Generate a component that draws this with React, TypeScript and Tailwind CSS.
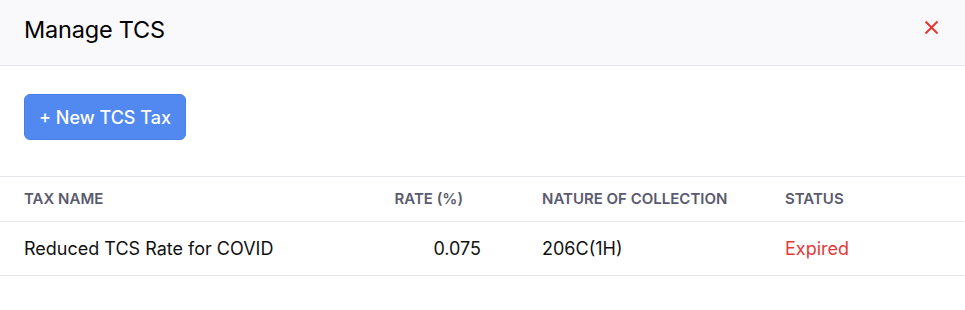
import React from 'react';

const rows = [
  { name: 'Reduced TCS Rate for COVID', rate: '0.075', nature: '206C(1H)', status: 'Expired' },
];

const App: React.FC = () => {
  return (
    <div className="w-[965px] h-[310px] bg-white font-['Inter',sans-serif] text-[#1f1f1f]">
      {/* header */}
      <div className="h-[66px] bg-[#f9f9fb] border-b border-[#e6e6ec] flex items-center justify-between pl-6 pr-6">
        <h1 className="text-[23.5px] font-normal text-black tracking-[-0.2px] pb-[5px]">Manage TCS</h1>
        <button className="self-start mt-[17px] w-5 h-5 flex items-center justify-center text-[#e5392f]">
          <svg width="15" height="15" viewBox="0 0 15 15" fill="none" stroke="currentColor" strokeWidth="2">
            <path d="M1.5 1.5 L13.5 13.5 M13.5 1.5 L1.5 13.5" />
          </svg>
        </button>
      </div>

      {/* action */}
      <div className="px-6 pt-7 pb-9">
        <button className="h-[46px] px-[14px] rounded-md bg-[#5189f1] border border-[#4a7fe6] text-white text-[18px] font-medium">
          + New TCS Tax
        </button>
      </div>

      {/* table */}
      <table className="w-full border-collapse table-fixed">
        <colgroup>
          <col className="w-[380px]" />
          <col className="w-[101px]" />
          <col className="w-[304px]" />
          <col />
        </colgroup>
        <thead>
          <tr className="border-t border-b border-[#e6e6ec] h-[45px] text-[15px] font-semibold text-[#5a5a6e] uppercase">
            <th className="text-left pl-6 font-semibold">Tax Name</th>
            <th className="text-right pr-[18px] font-semibold">Rate (%)</th>
            <th className="text-left pl-[61px] font-semibold">Nature of Collection</th>
            <th className="text-left font-semibold">Status</th>
          </tr>
        </thead>
        <tbody>
          {rows.map((r) => (
            <tr key={r.name} className="border-b border-[#e6e6ec] h-[54px] text-[18px]">
              <td className="pl-6 text-[#111]">{r.name}</td>
              <td className="text-right text-[#111]">{r.rate}</td>
              <td className="pl-[61px] text-[#111]">{r.nature}</td>
              <td className="text-[#e5393b]">{r.status}</td>
            </tr>
          ))}
        </tbody>
      </table>
    </div>
  );
};

export default App;
